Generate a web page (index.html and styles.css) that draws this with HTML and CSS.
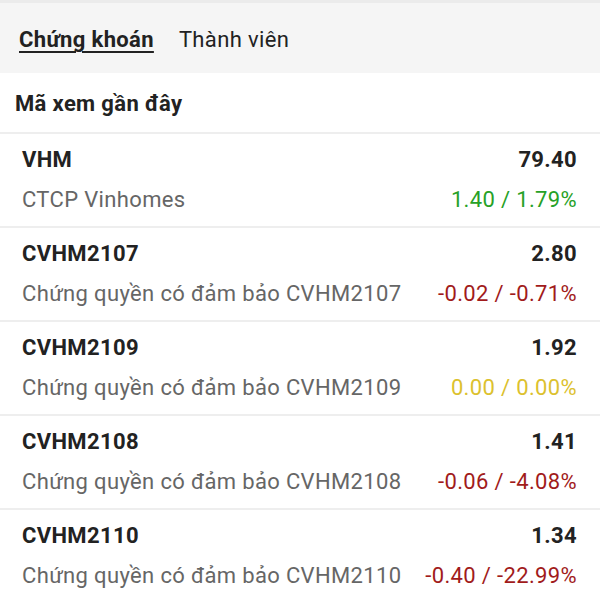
FILE: index.html
```html
<!DOCTYPE html>
<html lang="vi">
  <head>
    <meta charset="UTF-8" />
    <meta name="viewport" content="width=device-width, initial-scale=1.0" />
    <title>Mã xem gần đây</title>
    <link rel="stylesheet" href="styles.css">
  </head>
  <body>
    <div class="tabs">
      <span class="tab active">Chứng khoán</span>
      <span class="tab">Thành viên</span>
    </div>

    <h2 class="section-title">Mã xem gần đây</h2>

    <ul class="stock-list">
      <li class="stock">
        <div class="stock-line">
          <span class="code">VHM</span>
          <span class="price">79.40</span>
        </div>
        <div class="stock-line">
          <span class="name">CTCP Vinhomes</span>
          <span class="change up">1.40 / 1.79%</span>
        </div>
      </li>
      <li class="stock">
        <div class="stock-line">
          <span class="code">CVHM2107</span>
          <span class="price">2.80</span>
        </div>
        <div class="stock-line">
          <span class="name">Chứng quyền có đảm bảo CVHM2107</span>
          <span class="change down">-0.02 / -0.71%</span>
        </div>
      </li>
      <li class="stock">
        <div class="stock-line">
          <span class="code">CVHM2109</span>
          <span class="price">1.92</span>
        </div>
        <div class="stock-line">
          <span class="name">Chứng quyền có đảm bảo CVHM2109</span>
          <span class="change flat">0.00 / 0.00%</span>
        </div>
      </li>
      <li class="stock">
        <div class="stock-line">
          <span class="code">CVHM2108</span>
          <span class="price">1.41</span>
        </div>
        <div class="stock-line">
          <span class="name">Chứng quyền có đảm bảo CVHM2108</span>
          <span class="change down">-0.06 / -4.08%</span>
        </div>
      </li>
      <li class="stock">
        <div class="stock-line">
          <span class="code">CVHM2110</span>
          <span class="price">1.34</span>
        </div>
        <div class="stock-line">
          <span class="name">Chứng quyền có đảm bảo CVHM2110</span>
          <span class="change down">-0.40 / -22.99%</span>
        </div>
      </li>
    </ul>
  </body>
</html>
```

FILE: styles.css
```css
body{
  margin: 0;
  background-color: white;
  font-family: Roboto, "Noto Sans", Arial, sans-serif;
  letter-spacing: 0.35px;
  color: #222;
}
.tabs{
  display: flex;
  align-items: center;
  gap: 25px;
  height: 73px;
  padding-left: 19px;
  padding-top: 3px;
  box-sizing: border-box;
  background-color: #f5f5f5;
  border-top: 3px solid #ebebeb;
  font-size: 22px;
}
.tab{
  color: #222;
}
.tab.active{
  font-weight: 700;
  text-decoration: underline;
  text-decoration-thickness: 2px;
  text-underline-offset: 4px;
}
.section-title{
  margin: 0;
  padding: 0 15px;
  height: 57px;
  line-height: 58px;
  font-size: 22px;
  font-weight: 700;
  border-bottom: 2px solid #eeeeee;
  margin-top: 2px;
}
.stock-list{
  list-style: none;
  margin: 0;
  padding: 0;
}
.stock{
  display: flex;
  flex-direction: column;
  gap: 12px;
  padding: 12px 23px 12px 22px;
  border-bottom: 2px solid #eeeeee;
}
.stock-line{
  display: flex;
  justify-content: space-between;
  line-height: 28px;
  font-size: 22px;
}
.code, .price{
  font-weight: 700;
}
.name{
  color: #666;
}
.up{
  color: #27a127;
}
.down{
  color: #a11b1b;
}
.flat{
  color: #dcc12e;
}
```
